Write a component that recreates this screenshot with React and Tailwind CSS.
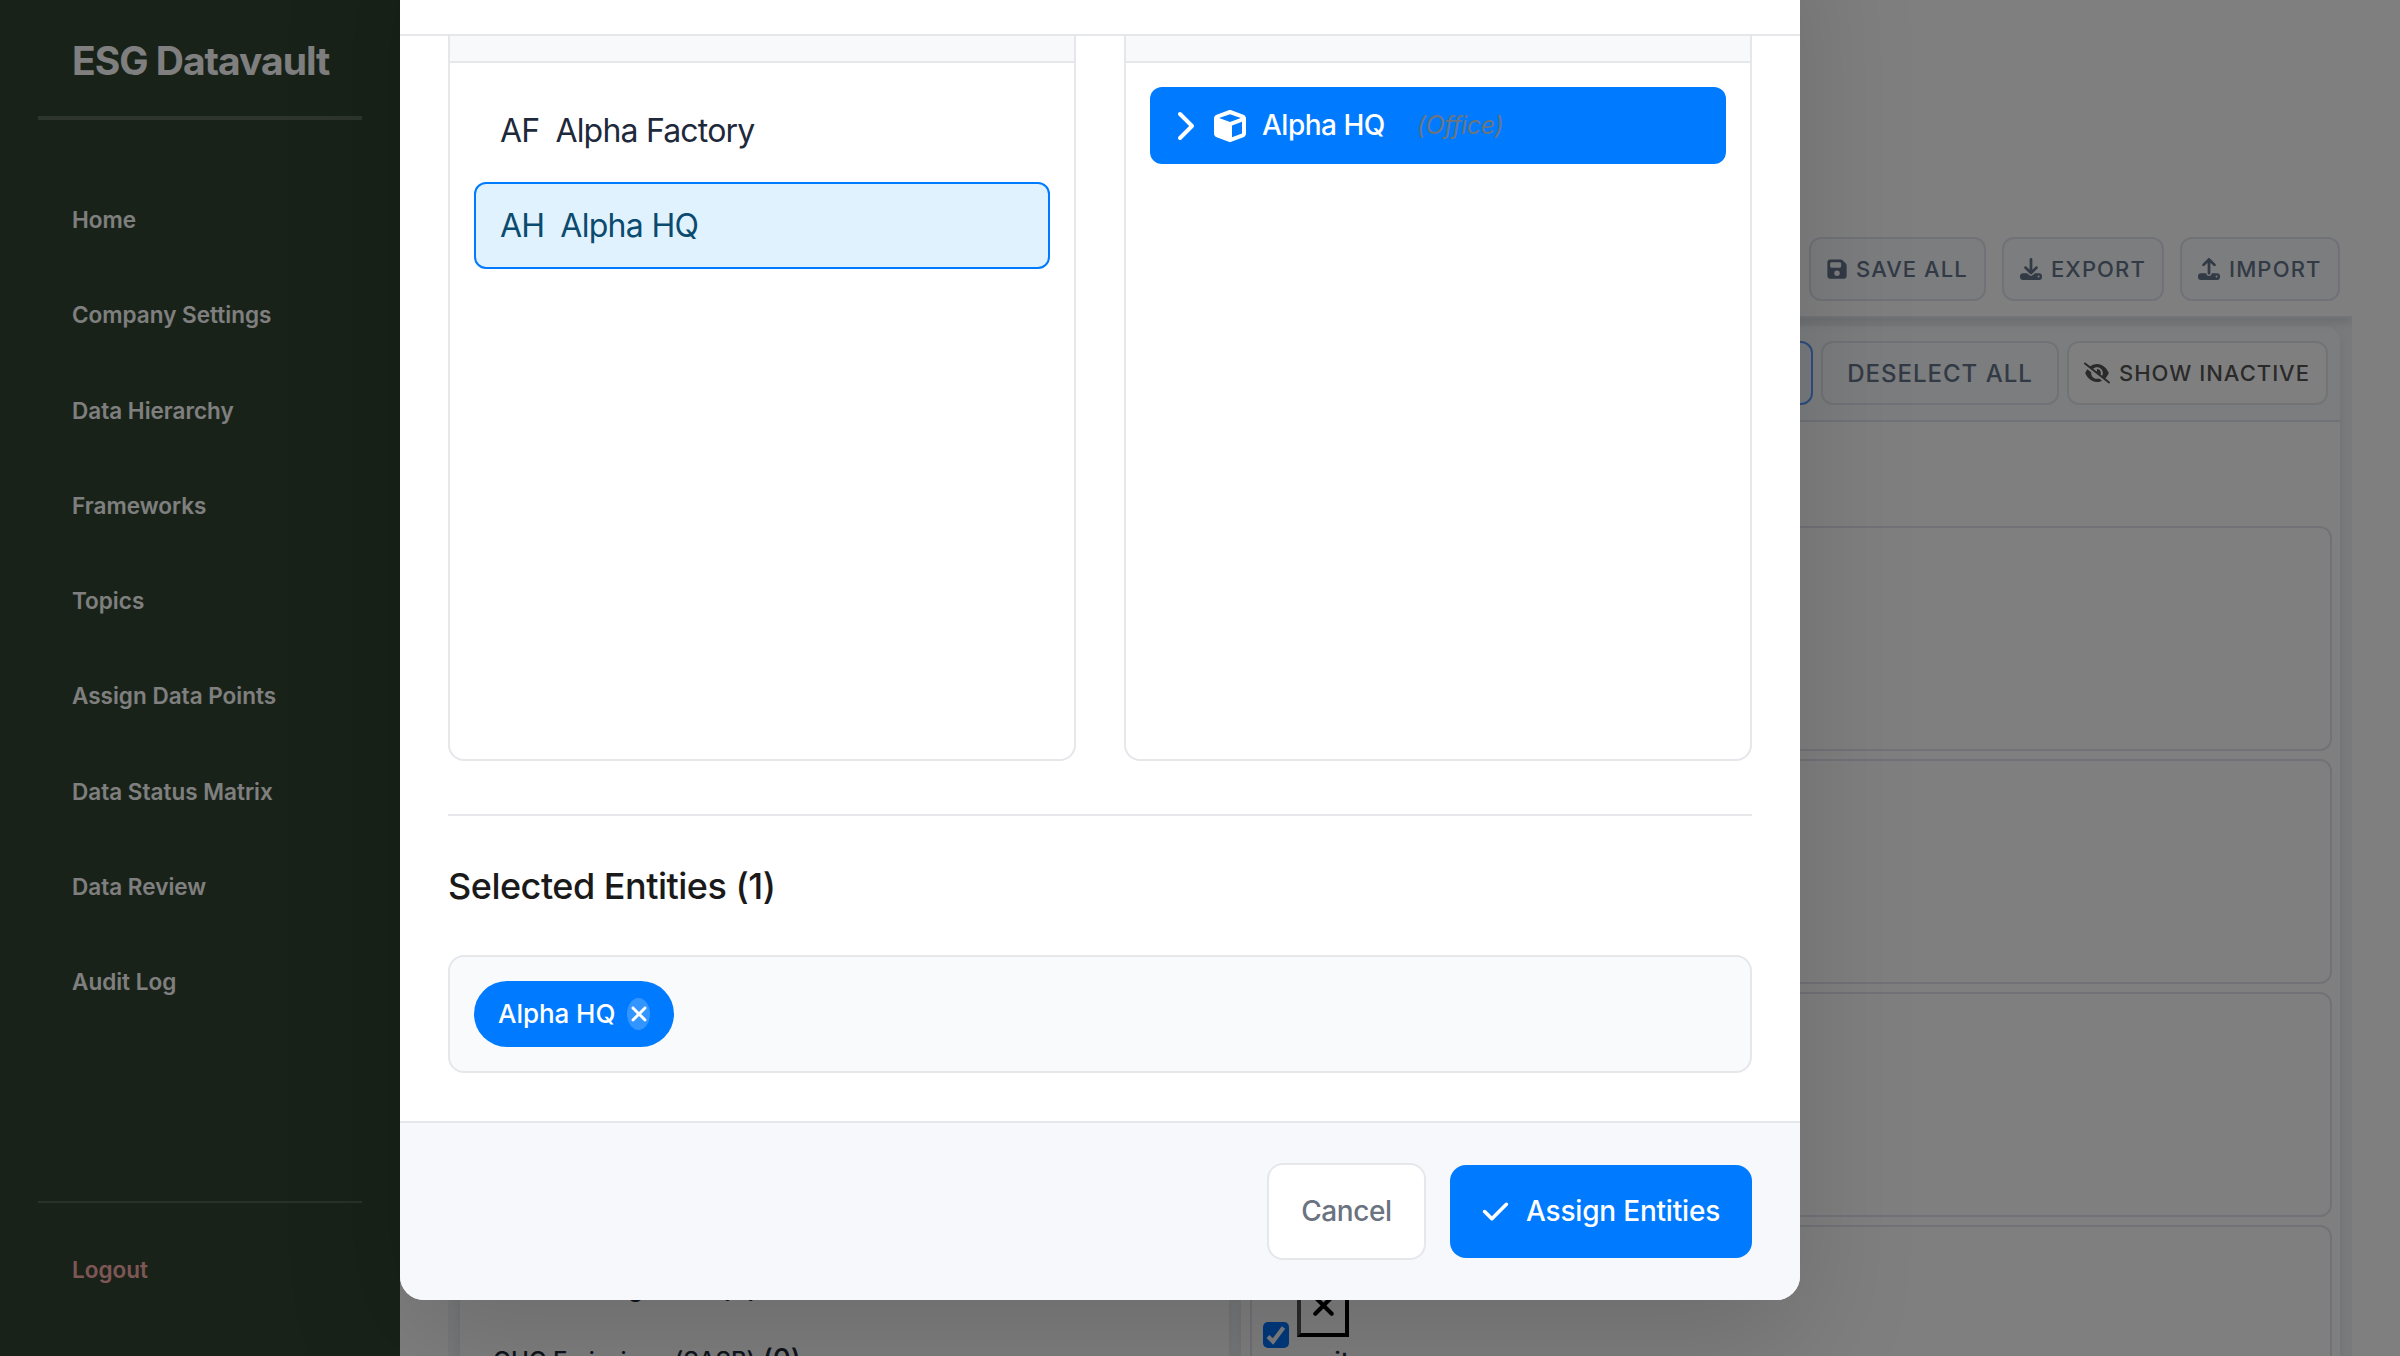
import { FaFloppyDisk, FaDownload, FaUpload, FaEyeSlash, FaChevronRight, FaCube, FaCheck, FaXmark } from "react-icons/fa6";

const NAV = [
  "Home",
  "Company Settings",
  "Data Hierarchy",
  "Frameworks",
  "Topics",
  "Assign Data Points",
  "Data Status Matrix",
  "Data Review",
  "Audit Log",
];

function Sidebar() {
  return (
    <aside className="flex h-full w-[400px] shrink-0 flex-col bg-[#314530] px-[38px] text-white">
      <h1 className="mt-[36px] h-[80px] pl-[34px] text-[39px] leading-[50px] font-bold tracking-[-1px] whitespace-nowrap">ESG Datavault</h1>
      <div className="h-1 bg-[#5a6b58]" />
      <nav className="mt-[52.4px] flex flex-col">
        {NAV.map((item) => (
          <a key={item} className="flex h-[95.25px] items-center pl-[34px] text-[22.5px] font-semibold tracking-[0.01px]">
            {item}
          </a>
        ))}
      </nav>
      <div className="mt-auto h-[155px] border-t-2 border-[#536351] pt-[51px] pl-[34px] text-[22.5px] leading-[32px] font-semibold text-[#fbacac]">
        Logout
      </div>
    </aside>
  );
}

function ActionButton({ icon: Icon, label, className }) {
  return (
    <button className={"flex h-16 items-center rounded-xl border-2 border-[#e2e5ee] bg-[#f8fafc] text-[22px] font-medium text-[#64748b] whitespace-nowrap " + className}>
      <Icon className="shrink-0" />
      <span>{label}</span>
    </button>
  );
}

function Page() {
  return (
    <main className="flex h-full min-w-0 flex-1 flex-col bg-white pr-12">
      <header className="z-10 flex h-[318px] shrink-0 items-end justify-end gap-4 border-b-2 border-[#e2e8f0] pr-3 pb-[15px] shadow-[0_4px_10px_rgba(0,0,0,0.12)] [clip-path:inset(0_0_-20px_0)]">
        <ActionButton icon={FaFloppyDisk} label="SAVE ALL" className="w-[177px] gap-[8px] pl-[15px] tracking-[1.05px]" />
        <ActionButton icon={FaDownload} label="EXPORT" className="w-[162px] gap-[9px] pl-4 tracking-[1.1px]" />
        <ActionButton icon={FaUpload} label="IMPORT" className="w-[160px] gap-[9px] pl-4 tracking-[1.15px]" />
      </header>
      <div className="ml-12 flex min-h-0 flex-1 gap-3 bg-[#f1f5f9] px-3 pt-2">
        <section className="flex w-[769px] shrink-0 flex-col rounded-t-2xl bg-white pl-[33px] text-[24px] leading-[78px] font-medium text-[#1e293b] shadow-[0_4px_12px_rgba(0,0,0,0.08)]">
          <div className="mt-[922px] h-[72px] tracking-[-0.25px] whitespace-nowrap">
            Water Management <span className="text-[28px]">(0)</span>
          </div>
          <div className="-mb-[60px] h-[78px] tracking-[-0.05px] whitespace-nowrap">
            GHG Emissions (SASB)<span className="ml-[7px] text-[28px]">(0)</span>
          </div>
        </section>
        <section className="flex min-w-0 flex-1 flex-col rounded-t-2xl bg-white shadow-[0_4px_12px_rgba(0,0,0,0.08)]">
          <div className="flex h-24 shrink-0 items-start justify-end gap-2 rounded-t-2xl border-b-2 border-[#e2e5ee] bg-[#f8fafc] pt-[15px] pr-3">
            <button className="h-16 w-[170px] rounded-xl border-2 border-[#5b9cff] bg-[#f0f7ff] text-[24px] font-medium tracking-[1.2px] text-[#3b82f6]">ADD ALL</button>
            <button className="h-16 w-[238px] rounded-xl border-2 border-[#e2e5ee] bg-[#f8fafc] pt-px text-[24px] font-medium tracking-[1px] text-[#64748b] whitespace-nowrap">DESELECT ALL</button>
            <button className="flex h-16 w-[261px] items-center gap-[9px] rounded-xl border-2 border-[#e5e7eb] bg-white pl-[15px] text-[22px] font-medium tracking-[1px] text-[#555] whitespace-nowrap">
              <FaEyeSlash className="size-[26px] shrink-0" />
              SHOW INACTIVE
            </button>
          </div>
          <div className="flex flex-col gap-2 pt-[104px] pr-2 pl-[9px]">
            <div className="h-[225px] shrink-0 rounded-xl border-2 border-[#e2e5ee]" />
            <div className="h-[225px] shrink-0 rounded-xl border-2 border-[#e2e5ee]" />
            <div className="h-[225px] shrink-0 rounded-xl border-2 border-[#e2e5ee]" />
            <div className="flex h-[225px] shrink-0 items-start rounded-xl border-2 border-[#e2e5ee] pl-[11px] text-[#1e293b]">
              <div className="mt-[95px] flex size-[26px] shrink-0 items-center justify-center rounded-[5px] bg-[#0075ff] text-white">
                <svg viewBox="0 0 26 26" className="size-[26px]"><path d="M5 14.5l5 5L20.5 5.5" fill="none" stroke="currentColor" strokeWidth="4.2" /></svg>
              </div>
              <div className="ml-2 w-[80px]">
                <div className="mt-[46px] flex h-[64px] w-[52px] items-center justify-center border-[4px] border-t-[#555] border-r-black border-b-black border-l-[#555] text-black">
                  <FaXmark className="size-[33px] shrink-0" />
                </div>
                <div className="mt-[9px] pl-[6px] text-[26px] leading-[32px] font-medium">unit</div>
              </div>
            </div>
          </div>
        </section>
      </div>
    </main>
  );
}

function Panel({ children }) {
  return (
    <div className="flex h-[821px] w-[628px] flex-col overflow-hidden rounded-2xl border-2 border-[#e5e7eb]">
      <div className="h-[121px] shrink-0 border-b-2 border-[#e5e7eb] bg-[#f8f9fb]" />
      <div className="flex flex-col gap-2 p-6">{children}</div>
    </div>
  );
}

function Modal() {
  return (
    <div className="absolute top-[-100px] left-[400px] flex h-[1400px] w-[1400px] flex-col overflow-hidden rounded-3xl bg-white shadow-[0_40px_120px_rgba(0,0,0,0.15)]">
      <div className="h-[136px] shrink-0 border-b-2 border-[#e5e7eb]" />
      <div className="flex h-[1085px] shrink-0 flex-col justify-end overflow-hidden px-12 pb-12">
        <div className="flex shrink-0 justify-between">
          <Panel>
            <div className="flex h-[87px] items-center gap-[16px] rounded-xl border-2 border-transparent pt-px pl-[24px] text-[32px] text-[#1e293b]">
              <span className="tracking-[-0.8px]">AF</span>
              <span className="tracking-[-0.8px]">Alpha Factory</span>
            </div>
            <div className="flex h-[87px] items-center gap-[16px] rounded-xl border-2 border-[#007bff] bg-[#e0f2fe] pt-px pl-[24px] text-[32px] text-[#0c4a6e]">
              <span className="tracking-[-0.8px]">AH</span>
              <span className="tracking-[-0.7px]">Alpha HQ</span>
            </div>
          </Panel>
          <Panel>
            <div className="flex h-[77px] items-center rounded-xl bg-[#007bff] pl-[24px] text-[28px] text-white">
              <FaChevronRight className="h-8 w-5" />
              <FaCube className="ml-5 size-8" />
              <span className="-mt-px ml-4 font-medium tracking-[-0.5px]">Alpha HQ</span>
              <span className="ml-8 text-[25px] tracking-[-0.4px] text-[#6c757d] italic">(Office)</span>
            </div>
          </Panel>
        </div>
        <div className="mt-[53px] h-0.5 shrink-0 bg-[#e5e7eb]" />
        <h2 className="mt-[48px] h-[91px] shrink-0 text-[36px] leading-[44px] font-medium tracking-[-0.5px] text-[#1a1a1a]">Selected Entities (1)</h2>
        <div className="flex h-[118px] shrink-0 items-center rounded-2xl border-2 border-[#e5e7eb] bg-[#f9fafc] px-6">
          <div className="flex h-[66px] w-[200px] items-center rounded-full bg-[#007bff] pl-6 text-[26px] font-medium text-white">
            <span className="-mt-0.5 tracking-[-0.05px] whitespace-nowrap">Alpha HQ</span>
            <span className="ml-auto mr-6 flex h-8 w-[23px] items-center justify-center rounded-[50%] bg-white/20">
              <FaXmark className="size-[24px] shrink-0" />
            </span>
          </div>
        </div>
      </div>
      <footer className="flex flex-1 items-center justify-end gap-6 border-t-2 border-[#e5e7eb] bg-[#f7f8fc] px-12">
        <button className="h-[97px] w-[159px] rounded-2xl border-2 border-[#e5e7eb] bg-white pb-px text-[28px] font-medium tracking-[-0.4px] text-[#6b7280]">Cancel</button>
        <button className="flex h-[93px] w-[302px] items-center gap-4 rounded-2xl bg-[#007bff] pb-px pl-[31px] text-[28px] font-medium tracking-[-0.2px] whitespace-nowrap text-white">
          <FaCheck className="size-[29px]" />
          Assign Entities
        </button>
      </footer>
    </div>
  );
}

export default function App() {
  return (
    <div className="relative flex h-[1356px] w-[2400px] overflow-hidden bg-white font-['Inter',sans-serif]">
      <Sidebar />
      <Page />
      <div className="absolute inset-0 z-20 overflow-hidden bg-black/50">
        <Modal />
      </div>
    </div>
  );
}
